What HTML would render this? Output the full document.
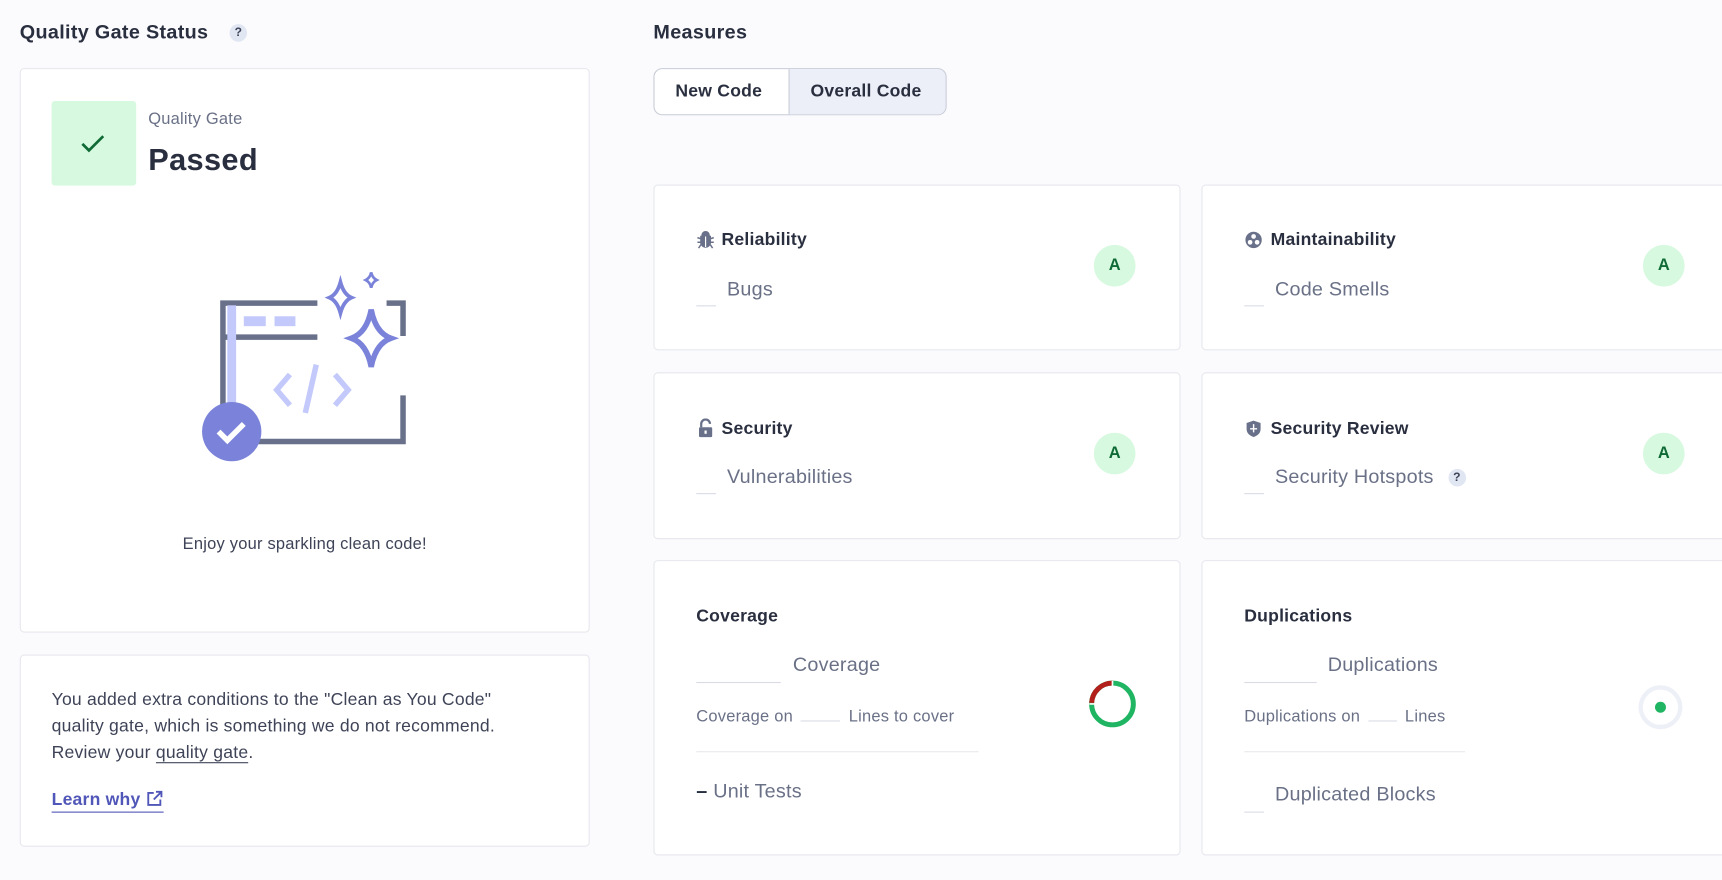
<!DOCTYPE html>
<html><head><meta charset="utf-8"><style>
html,body{margin:0;padding:0;width:1722px;height:880px;overflow:hidden;background:#fbfbfd;}
#w{position:absolute;left:0;top:0;width:1568px;height:801px;transform:scale(1.0982);transform-origin:0 0;font-family:"Liberation Sans",sans-serif;color:#2a2f40;}
.a{position:absolute;white-space:nowrap;}
.card{position:absolute;background:#fff;border:1px solid #e6e8ee;border-radius:4px;box-sizing:border-box;}
.h{font-size:18px;font-weight:bold;margin-top:2px;letter-spacing:0.3px;}
.t{font-size:16px;font-weight:bold;color:#2a2f40;margin-top:2px;letter-spacing:0.2px;}
.l{font-size:18px;color:#6a7187;margin-top:2px;letter-spacing:0.2px;}
.s{font-size:15px;color:#6a7187;margin-top:2px;letter-spacing:0.2px;}
.ln{position:absolute;height:1px;background:#d9dce5;}
.badge{position:absolute;width:38px;height:38px;border-radius:50%;background:#d7f9e0;color:#0f6b35;font-weight:bold;font-size:15px;text-align:center;line-height:38px;}
.q{display:inline-block;width:16px;height:16px;border-radius:50%;background:#e1e6f3;color:#3e4357;font-size:11px;font-weight:bold;text-align:center;line-height:16px;}
</style></head><body><div id="w">
<div class="a h" style="left:18px;top:17px;">Quality Gate Status</div>
<div class="a" style="left:209px;top:20px;"><span class="q">?</span></div>
<div class="a h" style="left:595px;top:17px;">Measures</div>

<div class="card" style="left:18px;top:62px;width:519px;height:514px;"></div>
<div class="a" style="left:47px;top:92px;width:77px;height:77px;background:#d7f9e0;border-radius:3px;"></div>
<svg class="a" style="left:72px;top:118px" width="26" height="26" viewBox="0 0 26 26"><path d="M3 13l6 6L22 6" fill="none" stroke="#0f6b35" stroke-width="2.5"/></svg>
<div class="a" style="left:135px;top:100px;font-size:15px;color:#6a7187;letter-spacing:0.2px;">Quality Gate</div>
<div class="a" style="left:135px;top:130px;font-size:28px;font-weight:bold;letter-spacing:0.3px;">Passed</div>

<svg class="a" style="left:0;top:0" width="560" height="480">
<path d="M289 276H203v126h164V360" fill="none" stroke="#69718a" stroke-width="5"/>
<path d="M352 276h15v30" fill="none" stroke="#69718a" stroke-width="5"/>
<line x1="203" y1="307" x2="289" y2="307" stroke="#69718a" stroke-width="5"/>
<rect x="207" y="278" width="8" height="90" fill="#c3c9fb"/>
<rect x="222" y="288" width="20" height="9" fill="#c3c9fb"/><rect x="250" y="288" width="19" height="9" fill="#c3c9fb"/>
<path d="M264 341l-12 14 12 14M305 341l12 14-12 14M288 332l-10 44" fill="none" stroke="#c3c9fb" stroke-width="5"/>
<path d="M310 257Q313 268 320 271Q313 274 310 285Q307 274 300 271Q307 268 310 257z" fill="none" stroke="#7a83d9" stroke-width="3.5"/>
<path d="M338 248Q339 253 343 255Q339 257 338 262Q337 257 333 255Q337 253 338 248z" fill="none" stroke="#7a83d9" stroke-width="2.5"/>
<path d="M338 282Q342 303 356 308Q342 313 338 334Q334 313 320 308Q334 303 338 282z" fill="none" stroke="#7a83d9" stroke-width="5"/>
<circle cx="211" cy="393" r="27" fill="#7a83d9"/>
<path d="M199 393l8 8 15-15" fill="none" stroke="#fff" stroke-width="5"/>
</svg>
<div class="a" style="left:18px;width:519px;text-align:center;top:487px;font-size:15px;color:#3e4357;letter-spacing:0.2px;">Enjoy your sparkling clean code!</div>

<div class="card" style="left:18px;top:596px;width:519px;height:175px;"></div>
<div class="a" style="left:47px;top:626px;font-size:16px;line-height:24px;color:#3e4357;letter-spacing:0.2px;">You added extra conditions to the "Clean as You Code"<br>quality gate, which is something we do not recommend.<br>Review your <span style="border-bottom:1px solid #3e4357">quality gate</span>.</div>
<div class="a" style="left:47px;top:718px;font-size:16px;font-weight:bold;color:#5157b8;border-bottom:1px solid #5157b8;line-height:21px;letter-spacing:0.2px;">Learn why <svg width="16" height="16" viewBox="0 0 16 16" style="vertical-align:-2px"><path d="M7 3H2v11h11V9M9 2h5v5M14 2L7 9" fill="none" stroke="#5157b8" stroke-width="1.7"/></svg></div>

<div class="a" style="left:595px;top:62px;width:267px;height:43px;border:1px solid #c8ccd8;border-radius:8px;box-sizing:border-box;background:#fff;overflow:hidden;">
<div class="a" style="left:122px;top:0;width:145px;height:43px;background:#eceff8;border-left:1px solid #c8ccd8;"></div>
<div class="a" style="left:19px;top:12px;font-size:16px;font-weight:bold;letter-spacing:0.2px;">New Code</div>
<div class="a" style="left:142px;top:12px;font-size:16px;font-weight:bold;letter-spacing:0.2px;">Overall Code</div>
</div>

<div class="card" style="left:595px;top:168px;width:480px;height:151px;"></div>
<div class="card" style="left:1094px;top:168px;width:500px;height:151px;"></div>
<div class="card" style="left:595px;top:339px;width:480px;height:152px;"></div>
<div class="card" style="left:1094px;top:339px;width:500px;height:152px;"></div>
<div class="card" style="left:595px;top:510px;width:480px;height:269px;"></div>
<div class="card" style="left:1094px;top:510px;width:500px;height:269px;"></div>

<svg class="a" style="left:634px;top:210px" width="17" height="17" viewBox="0 0 16 16"><path d="M5 4a3 3 0 016 0zM4 5h8v5a4 4 0 01-8 0zM1 6l3 1M15 6l-3 1M1 10h3M15 10h-3M2 15l2-3M14 15l-2-3" fill="#69718a" stroke="#69718a" stroke-width="1.3"/><line x1="8" y1="5" x2="8" y2="14" stroke="#fff" stroke-width="1"/></svg>
<div class="a t" style="left:657px;top:208px;">Reliability</div>
<div class="ln" style="left:634px;top:278px;width:18px;"></div>
<div class="a l" style="left:662px;top:251px;">Bugs</div>
<div class="badge" style="left:996px;top:223px;">A</div>

<svg class="a" style="left:1133px;top:210px" width="17" height="17" viewBox="0 0 16 16"><circle cx="8" cy="8" r="7" fill="#69718a"/><circle cx="8" cy="5" r="2" fill="#fff"/><circle cx="5" cy="10" r="2" fill="#fff"/><circle cx="11" cy="10" r="2" fill="#fff"/></svg>
<div class="a t" style="left:1157px;top:208px;">Maintainability</div>
<div class="ln" style="left:1133px;top:278px;width:18px;"></div>
<div class="a l" style="left:1161px;top:251px;">Code Smells</div>
<div class="badge" style="left:1496px;top:223px;">A</div>

<svg class="a" style="left:635px;top:381px" width="15" height="18" viewBox="0 0 14 18"><path d="M3 8V5a4 4 0 018 0" fill="none" stroke="#69718a" stroke-width="2"/><rect x="1" y="8" width="12" height="9" rx="1" fill="#69718a"/><rect x="6" y="11" width="2" height="3" fill="#fff"/></svg>
<div class="a t" style="left:657px;top:380px;">Security</div>
<div class="ln" style="left:634px;top:449px;width:18px;"></div>
<div class="a l" style="left:662px;top:422px;">Vulnerabilities</div>
<div class="badge" style="left:996px;top:394px;">A</div>

<svg class="a" style="left:1133px;top:382px" width="17" height="17" viewBox="0 0 16 16"><path d="M8 1l6 2v5c0 4-3 6-6 7-3-1-6-3-6-7V3z" fill="#69718a"/><path d="M8 4v7M5 8h6" stroke="#fff" stroke-width="1.2"/></svg>
<div class="a t" style="left:1157px;top:380px;">Security Review</div>
<div class="ln" style="left:1133px;top:449px;width:18px;"></div>
<div class="a l" style="left:1161px;top:422px;">Security Hotspots <span class="q" style="margin-left:8px;vertical-align:2px">?</span></div>
<div class="badge" style="left:1496px;top:394px;">A</div>

<div class="a t" style="left:634px;top:551px;">Coverage</div>
<div class="ln" style="left:634px;top:621px;width:77px;"></div>
<div class="a l" style="left:722px;top:593px;">Coverage</div>
<div class="a s" style="left:634px;top:642px;">Coverage on <span style="display:inline-block;width:36px;border-bottom:1px solid #d9dce5;margin:0 3px"></span> Lines to cover</div>
<div class="ln" style="left:634px;top:684px;width:257px;background:#e6e8ee;"></div>
<div class="a l" style="left:634px;top:708px;"><b style="color:#2a2f40">–</b> Unit Tests</div>
<svg class="a" style="left:990px;top:618px" width="46" height="46" viewBox="0 0 46 46"><circle cx="23" cy="23" r="19" fill="none" stroke="#1fb562" stroke-width="4.5"/><path d="M23 4A19 19 0 004 22" fill="none" stroke="#b3201c" stroke-width="4.5"/><line x1="23" y1="2" x2="23" y2="7" stroke="#fff" stroke-width="1.5"/><line x1="2" y1="23" x2="7" y2="23" stroke="#fff" stroke-width="1.5"/></svg>

<div class="a t" style="left:1133px;top:551px;">Duplications</div>
<div class="ln" style="left:1133px;top:621px;width:66px;"></div>
<div class="a l" style="left:1209px;top:593px;">Duplications</div>
<div class="a s" style="left:1133px;top:642px;">Duplications on <span style="display:inline-block;width:26px;border-bottom:1px solid #d9dce5;margin:0 3px"></span> Lines</div>
<div class="ln" style="left:1133px;top:684px;width:201px;background:#e6e8ee;"></div>
<div class="ln" style="left:1133px;top:739px;width:18px;"></div>
<div class="a l" style="left:1161px;top:711px;">Duplicated Blocks</div>
<svg class="a" style="left:1490px;top:622px" width="44" height="44" viewBox="0 0 44 44"><circle cx="22" cy="22" r="18" fill="none" stroke="#eef0f7" stroke-width="4"/><circle cx="22" cy="22" r="5" fill="#1fb562"/></svg>
</div></body></html>
